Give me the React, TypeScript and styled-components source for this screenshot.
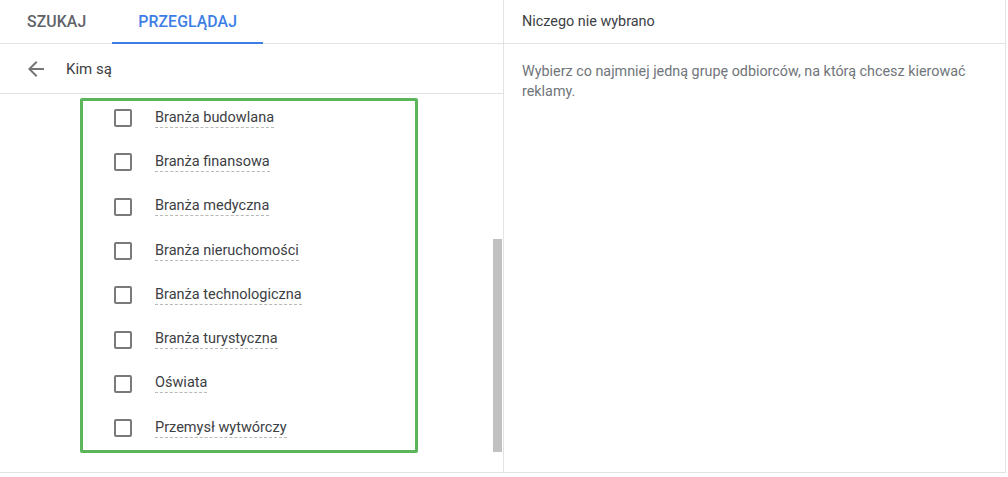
import React from 'react';
import styled, { createGlobalStyle } from 'styled-components';

const GlobalStyle = createGlobalStyle`
  html, body {
    margin: 0;
    padding: 0;
    background: #fff;
  }
  body {
    font-family: Roboto, "Noto Sans", Arial, sans-serif;
    color: #3c4043;
  }
`;

const Frame = styled.div`
  display: grid;
  grid-template-columns: 504px 1fr;
  width: 1005px;
  height: 472px;
  border-right: 1px solid #e3e3e3;
  border-bottom: 1px solid #e3e3e3;
  background: #fff;
`;

const Column = styled.div`
  display: flex;
  flex-direction: column;
  min-width: 0;
  border-right: 1px solid #e3e3e3;

  &:last-child {
    border-right: none;
  }
`;

const TabBar = styled.div`
  display: flex;
  height: 44px;
  padding-left: 1px;
  border-bottom: 1px solid #e3e3e3;
  box-sizing: border-box;
`;

const Tab = styled.div<{ $active?: boolean }>`
  display: flex;
  align-items: center;
  padding: 0 26px;
  margin-bottom: -1px;
  font-size: 15.8px;
  font-weight: 500;
  letter-spacing: 0.1px;
  color: ${p => (p.$active ? '#3d7ee6' : '#5f6368')};
  border-bottom: 2px solid ${p => (p.$active ? '#3d7ee6' : 'transparent')};
`;

const BackRow = styled.div`
  display: flex;
  align-items: center;
  height: 50px;
  padding-left: 24px;
  border-bottom: 1px solid #e3e3e3;
  box-sizing: border-box;
`;

const BackIconBox = styled.span`
  display: flex;
  width: 24px;
  height: 24px;
  flex-shrink: 0;
`;

const BackTitle = styled.span`
  margin-left: 18px;
  font-size: 15px;
  color: #3c4043;
`;

const ListArea = styled.div`
  position: relative;
  flex: 1;
  padding: 4px 0 0 80px;
`;

const Highlight = styled.div`
  width: 338px;
  height: 355px;
  box-sizing: border-box;
  border: 3px solid #5cb55a;
  border-radius: 2px;
  overflow: hidden;
`;

const List = styled.div`
  margin-top: -5px;
`;

const Row = styled.label`
  display: flex;
  align-items: center;
  gap: 23px;
  height: 44.3px;
  padding-left: 31px;
`;

const Box = styled.span`
  width: 18px;
  height: 18px;
  box-sizing: border-box;
  border: 2px solid #7a7a7a;
  border-radius: 2px;
  flex-shrink: 0;
`;

const Label = styled.span`
  font-size: 14.5px;
  color: #3c4043;
  line-height: 18px;
  border-bottom: 1px dashed #b8b8b8;
`;

const Thumb = styled.div`
  position: absolute;
  right: 1px;
  top: 145px;
  width: 9px;
  height: 213px;
  background: #c1c1c1;
`;

const PanelHead = styled.div`
  display: flex;
  align-items: center;
  height: 44px;
  padding-left: 18px;
  border-bottom: 1px solid #e3e3e3;
  box-sizing: border-box;
  font-size: 14.4px;
  color: #3c4043;
`;

const Hint = styled.p`
  margin: 0;
  padding: 18px 18px 0 18px;
  font-size: 14.35px;
  line-height: 20px;
  color: #70757a;
`;

const BackIcon = () => (
  <BackIconBox>
    <svg width="24" height="24" viewBox="0 0 24 24" fill="#757575">
      <path d="M20 11H7.83l5.59-5.59L12 4l-8 8 8 8 1.41-1.41L7.83 13H20v-2z" />
    </svg>
  </BackIconBox>
);

const items = [
  'Branża budowlana',
  'Branża finansowa',
  'Branża medyczna',
  'Branża nieruchomości',
  'Branża technologiczna',
  'Branża turystyczna',
  'Oświata',
  'Przemysł wytwórczy',
];

export default function App() {
  return (
    <>
      <GlobalStyle />
      <Frame>
        <Column>
          <TabBar>
            <Tab>SZUKAJ</Tab>
            <Tab $active>PRZEGLĄDAJ</Tab>
          </TabBar>
          <BackRow>
            <BackIcon />
            <BackTitle>Kim są</BackTitle>
          </BackRow>
          <ListArea>
            <Highlight>
              <List>
                {items.map(name => (
                  <Row key={name}>
                    <Box />
                    <Label>{name}</Label>
                  </Row>
                ))}
              </List>
            </Highlight>
            <Thumb />
          </ListArea>
        </Column>
        <Column>
          <PanelHead>Niczego nie wybrano</PanelHead>
          <Hint>
            Wybierz co najmniej jedną grupę odbiorców, na którą chcesz kierować reklamy.
          </Hint>
        </Column>
      </Frame>
    </>
  );
}
